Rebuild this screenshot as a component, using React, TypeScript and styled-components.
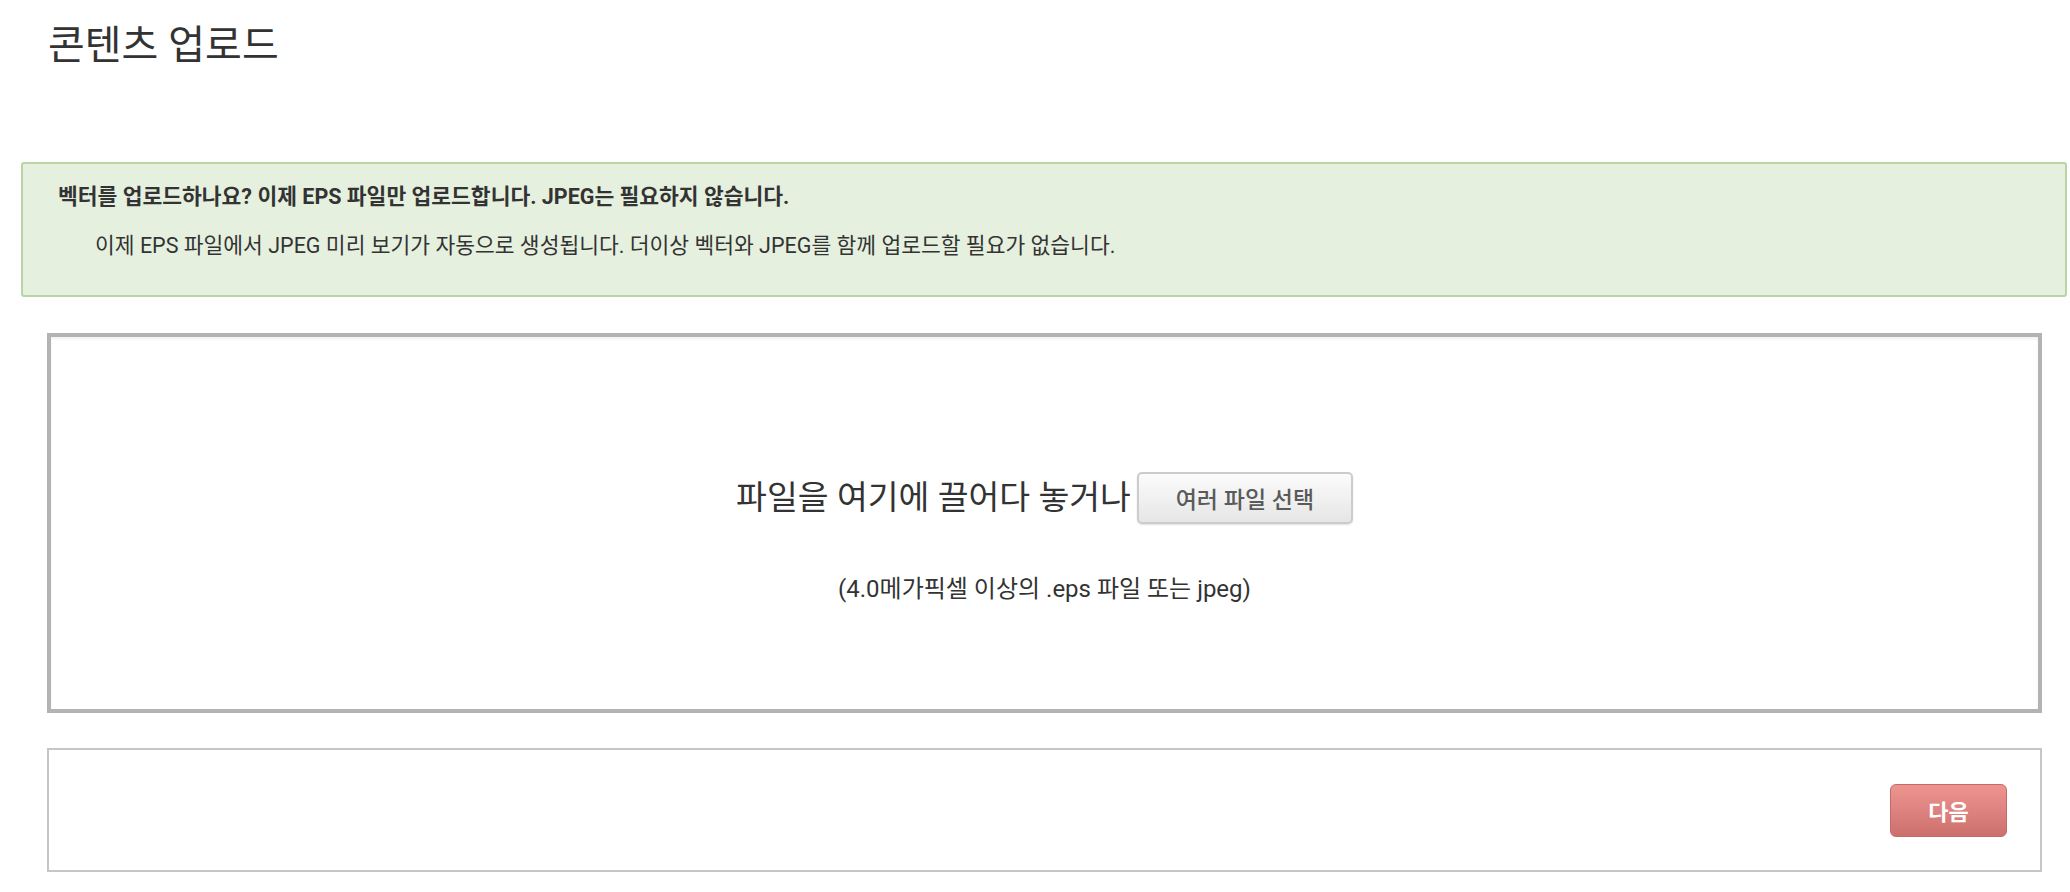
import React from "react";
import styled, { createGlobalStyle } from "styled-components";

const GlobalStyle = createGlobalStyle`
  html, body {
    margin: 0;
    padding: 0;
    background: #ffffff;
  }
  body {
    font-family: Roboto, "Noto Sans CJK KR", "Noto Sans", sans-serif;
    color: #333333;
  }
`;

const Page = styled.div`
  display: flex;
  flex-direction: column;
  padding: 0 3px 0 21px;
`;

const Title = styled.h1`
  margin: 23px 0 0 27px;
  font-size: 40px;
  line-height: 46px;
  font-weight: 400;
  color: #333333;
`;

const Notice = styled.div`
  margin-top: 93px;
  height: 135px;
  box-sizing: border-box;
  border: 2px solid #b8d5a3;
  border-radius: 3px;
  background: #e6f0df;
  padding: 18px 35px;
  display: flex;
  flex-direction: column;
  gap: 19px;
`;

const NoticeTitle = styled.div`
  font-size: 21.5px;
  line-height: 30px;
  font-weight: 700;
  color: #333333;
`;

const NoticeBody = styled.div`
  font-size: 21.5px;
  line-height: 30px;
  font-weight: 400;
  color: #333333;
  padding-left: 37px;
`;

const DropZone = styled.div`
  margin: 36px 25px 0 26px;
  height: 380px;
  box-sizing: border-box;
  border: 4px solid #b3b3b3;
  box-shadow: inset 0 2px 3px rgba(0, 0, 0, 0.06);
  display: flex;
  flex-direction: column;
  align-items: center;
  justify-content: center;
  gap: 50px;
  padding-top: 30px;
`;

const DropRow = styled.div`
  display: flex;
  align-items: center;
  gap: 6px;
`;

const DropText = styled.span`
  font-size: 33.5px;
  line-height: 42px;
  color: #333333;
`;

const SelectButton = styled.button`
  width: 216px;
  height: 52px;
  box-sizing: border-box;
  border: 2px solid #cccccc;
  border-radius: 5px;
  background: linear-gradient(#fbfbfb, #e6e6e6);
  box-shadow: 0 1px 2px rgba(0, 0, 0, 0.12);
  font-family: Roboto, "Noto Sans CJK KR", sans-serif;
  font-size: 23px;
  font-weight: 500;
  color: #5a5a5a;
  cursor: pointer;
  padding: 0;
`;

const DropHint = styled.div`
  font-size: 24px;
  line-height: 30px;
  color: #333333;
`;

const Footer = styled.div`
  margin: 35px 25px 0 26px;
  height: 124px;
  box-sizing: border-box;
  border: 2px solid #c6c6c6;
  display: flex;
  align-items: center;
  justify-content: flex-end;
  padding: 0 33px;
`;

const NextButton = styled.button`
  width: 117px;
  height: 53px;
  box-sizing: border-box;
  border: 1px solid #c46967;
  border-radius: 6px;
  background: linear-gradient(#ee9590, #cd706d);
  color: #ffffff;
  font-family: Roboto, "Noto Sans CJK KR", sans-serif;
  font-size: 22px;
  font-weight: 700;
  cursor: pointer;
  padding: 0;
`;

export default function App() {
  return (
    <>
      <GlobalStyle />
      <Page>
        <Title>콘텐츠 업로드</Title>
        <Notice>
          <NoticeTitle>
            벡터를 업로드하나요? 이제 EPS 파일만 업로드합니다. JPEG는 필요하지 않습니다.
          </NoticeTitle>
          <NoticeBody>
            이제 EPS 파일에서 JPEG 미리 보기가 자동으로 생성됩니다. 더이상 벡터와 JPEG를 함께 업로드할 필요가 없습니다.
          </NoticeBody>
        </Notice>
        <DropZone>
          <DropRow>
            <DropText>파일을 여기에 끌어다 놓거나</DropText>
            <SelectButton>여러 파일 선택</SelectButton>
          </DropRow>
          <DropHint>(4.0메가픽셀 이상의 .eps 파일 또는 jpeg)</DropHint>
        </DropZone>
        <Footer>
          <NextButton>다음</NextButton>
        </Footer>
      </Page>
    </>
  );
}
